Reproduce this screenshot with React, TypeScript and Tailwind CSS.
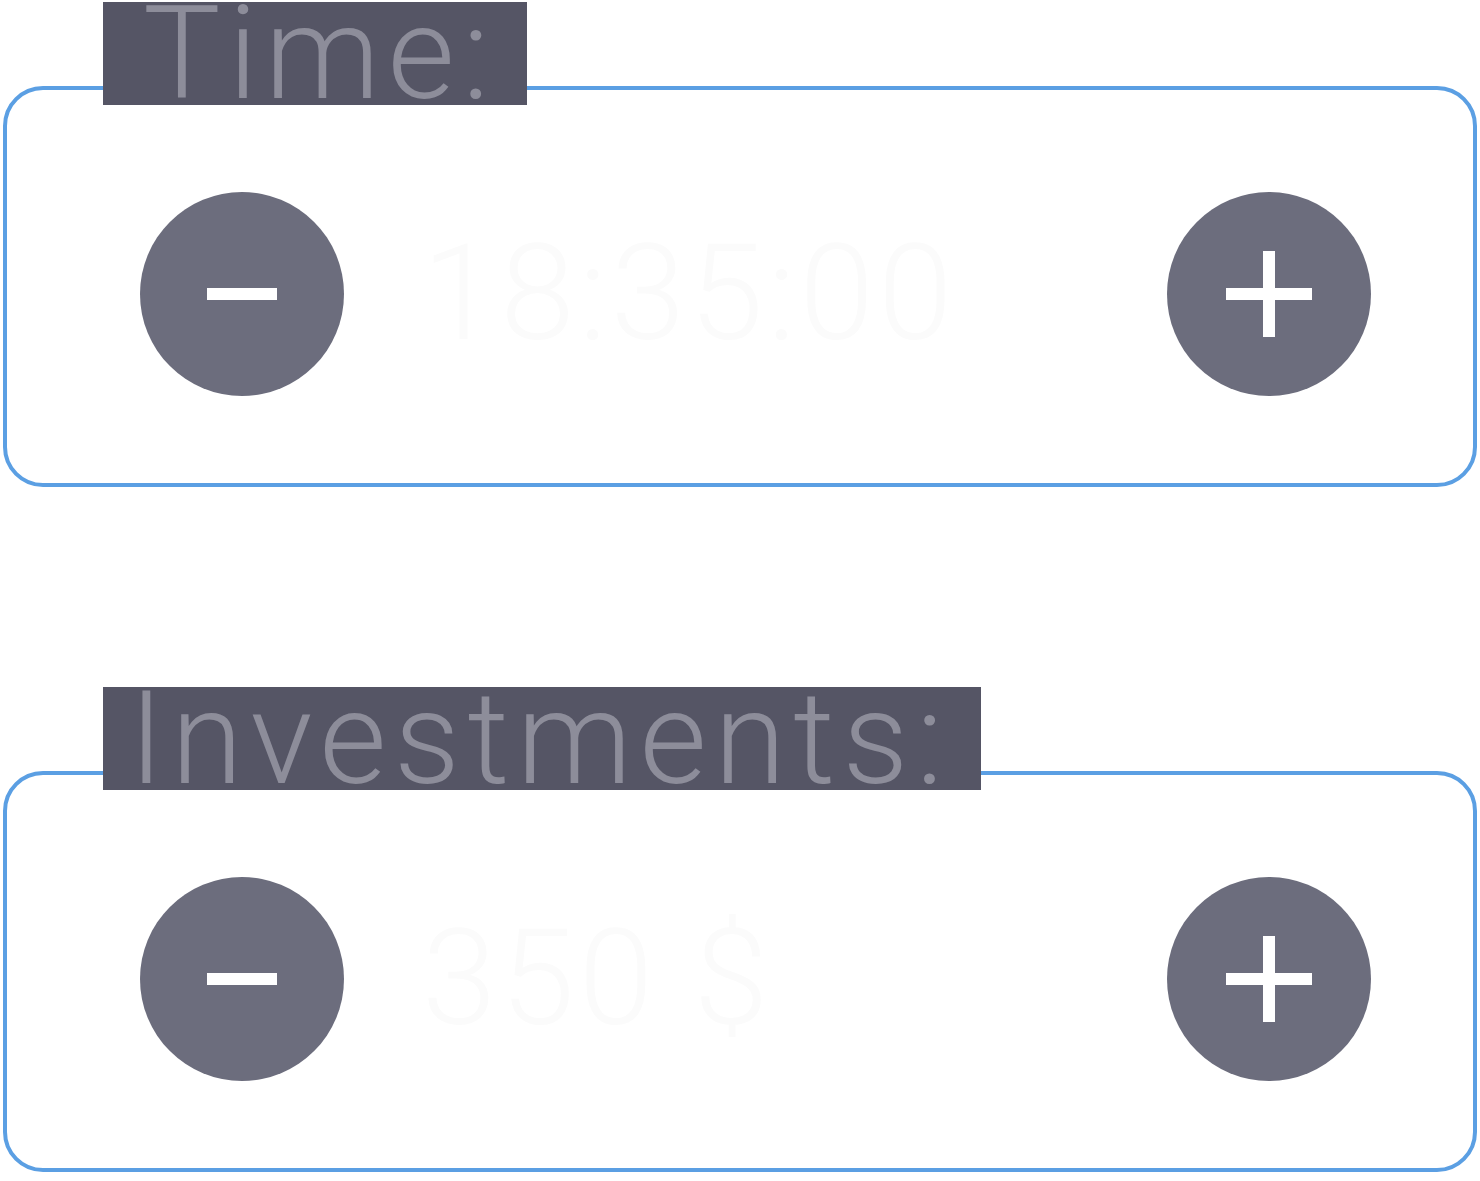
import React from "react";

function RoundButton({ kind }: { kind: "minus" | "plus" }) {
  return (
    <button
      type="button"
      className="flex h-[204px] w-[204px] shrink-0 items-center justify-center rounded-full bg-[#6c6d7d]"
    >
      <svg width="90" height="90" viewBox="0 0 90 90">
        {kind === "minus" ? (
          <rect x="10" y="39" width="70" height="12" fill="#ffffff" />
        ) : (
          <>
            <rect x="2" y="39" width="86" height="12" fill="#ffffff" />
            <rect x="39" y="2" width="12" height="86" fill="#ffffff" />
          </>
        )}
      </svg>
    </button>
  );
}

function Stepper({ label, value, labelPad }: { label: string; value: string; labelPad: string }) {
  return (
    <div className="relative flex h-[401px] items-center rounded-[40px] border-4 border-[#5b9fe3] bg-white pl-[133px] pr-[102px] pt-[14px]">
      {/* label sits on top of the border */}
      <div
        className={`absolute left-[96px] top-[-88px] h-[103px] bg-[#555565] text-[130px] font-light leading-[103px] tracking-[7.5px] text-[#8d8d9a] ${labelPad}`}
      >
        {label}
      </div>
      <RoundButton kind="minus" />
      <div className="ml-[78px] flex-1 text-[134px] font-light leading-none tracking-[4px] text-[#fbfbfb]">
        {value}
      </div>
      <RoundButton kind="plus" />
    </div>
  );
}

export default function App() {
  return (
    <div
      className="min-h-screen bg-white px-[3px] pt-[86px]"
      style={{ fontFamily: "Roboto, 'Liberation Sans', sans-serif" }}
    >
      <div className="flex flex-col gap-[284px]">
        <Stepper label="Time:" value="18:35:00" labelPad="pl-[40px] pr-[30px]" />
        <Stepper label="Investments:" value="350 $" labelPad="pl-[26px] pr-[30px]" />
      </div>
    </div>
  );
}
